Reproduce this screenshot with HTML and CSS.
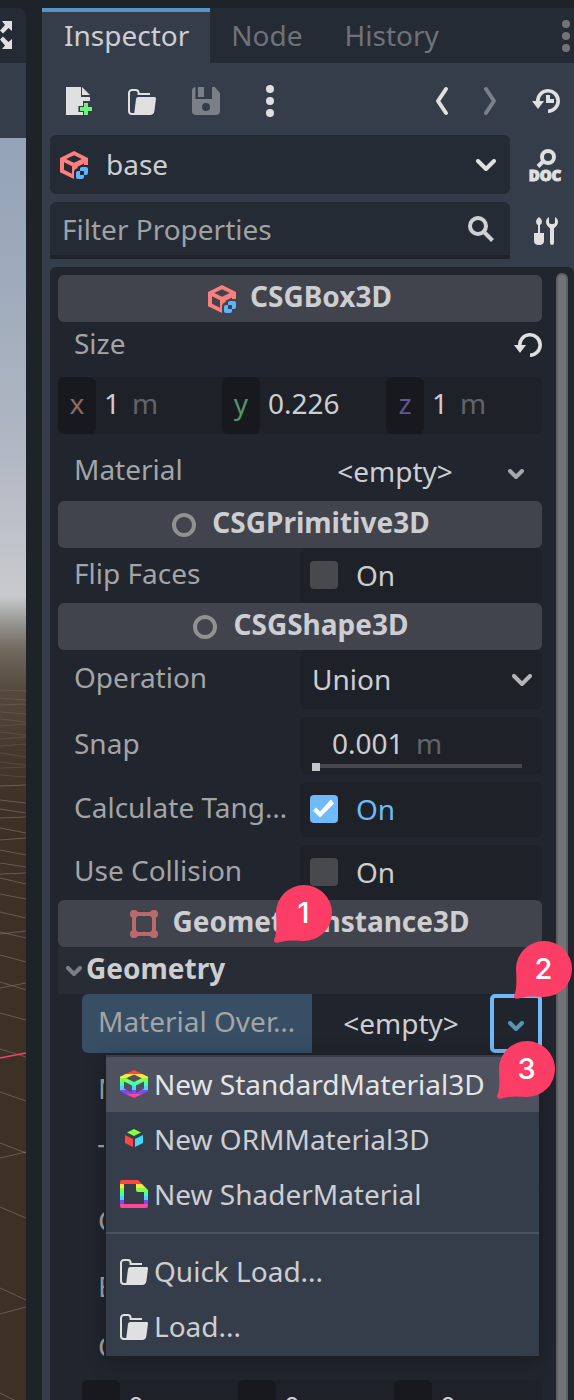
FILE: index.html
```html
<!DOCTYPE html>
<html lang="en">
<head>
<meta charset="utf-8">
<meta name="viewport" content="width=device-width, initial-scale=1">
<title>Inspector</title>
<link rel="stylesheet" href="styles.css">
</head>
<body>
<svg class="defs" aria-hidden="true">
  <defs>
    <linearGradient id="rainbow" gradientUnits="userSpaceOnUse" x1="0" y1="1" x2="0" y2="15">
      <stop offset="0.143" stop-color="#ff4545"/><stop offset="0.143" stop-color="#ffe345"/>
      <stop offset="0.286" stop-color="#ffe345"/><stop offset="0.286" stop-color="#80ff45"/>
      <stop offset="0.429" stop-color="#80ff45"/><stop offset="0.429" stop-color="#45ffa2"/>
      <stop offset="0.571" stop-color="#45ffa2"/><stop offset="0.571" stop-color="#45d7ff"/>
      <stop offset="0.714" stop-color="#45d7ff"/><stop offset="0.714" stop-color="#8045ff"/>
      <stop offset="0.857" stop-color="#8045ff"/><stop offset="0.857" stop-color="#ff4596"/>
    </linearGradient>
    <symbol id="csgbox" viewBox="1 1 14 14">
      <path fill="#fc7f7f" fill-rule="evenodd" d="M8 1 1 4.500v7.100L8 15v-3.200q0-1.800 1.800-2.200V8.900L13 7.300V8h2V4.500zM8 3.100l3.900 1.900L8 6.900 4.100 5zM3 6.600l4 2v3.800l-4-2z"/>
      <path fill="#5fb2ff" d="M12 9c-.554 0-1 .446-1 1v1h2v2h1c.554 0 1-.446 1-1v-2c0-.554-.446-1-1-1zm1 4h-2v-2h-1c-.554 0-1 .446-1 1v2c0 .554.446 1 1 1h2c.554 0 1-.446 1-1z"/>
    </symbol>
    <symbol id="circle" viewBox="1 1 14 14"><circle cx="8" cy="8" r="5" fill="none" stroke="#919191" stroke-width="2"/></symbol>
    <symbol id="folder" viewBox="0 0 16 16">
      <path fill="none" stroke="#e0e0e0" d="M4.600 14.500H3A1.500 1.500 0 0 1 1.500 13V4A1.500 1.500 0 0 1 3 2.500h1.800A1.500 1.500 0 0 1 6.300 4v.5H12"/>
      <path fill="#e0e0e0" d="M6.200 6H14.300q.8 0 .7.800L14.200 13q-.3 2-2.200 2H3.500q.6-.4.700-1.500L5 7q.1-1 1.200-1z"/>
    </symbol>
    <symbol id="chevron" viewBox="0 0 20 12"><path fill="none" stroke="currentColor" stroke-width="4" stroke-linecap="round" stroke-linejoin="round" d="M2 2l8 8 8-8"/></symbol>
    <symbol id="chevron-small" viewBox="0 0 16 10"><path fill="none" stroke="currentColor" stroke-width="4" stroke-linecap="round" stroke-linejoin="round" d="M2 2l6 6 6-6"/></symbol>
    <symbol id="callout" viewBox="0 0 60 60">
      <path fill="#fc3e66" d="M31 1a28 28 0 1 1 0 56C22 56 13 56 5 58.500C2 59.500 .2 57 1.500 54.500C4 49 3.500 40 3 29A28 28 0 0 1 31 1z"/>
    </symbol>
  </defs>
</svg>

<main class="editor">
  <section class="viewport" aria-label="3D viewport">
    <div class="viewport-tabs">
      <button class="plain" aria-label="Expand viewport">
        <svg width="14" height="28" viewBox="0 0 14 28" fill="#e0e0e0"><path d="M2 0h10v10L8.500 7 3 12.500 0 9.500 5 4zM0 18.500l3-3L8.500 21l3.500-3v10H2l3-3.500z"/></svg>
      </button>
    </div>
    <div class="viewport-bar"></div>
    <div class="scene">
      <svg class="grid-lines" viewBox="0 0 26 730" preserveAspectRatio="none" fill="none" stroke="#8d877d" stroke-width="1">
        <g opacity=".25"><path d="M0 20l26 1M0 28l26 2M0 35l26-1M0 42l26 2M0 49l26 3M0 56l26-2M0 62l26 3M0 69l26-2M0 76l26-2M0 83l26 4M0 92l26 3M0 98l26-1M0 105l26 2"/></g>
        <g opacity=".5"><path d="M0 116l26-1M0 130l26 3M0 139l26 4M0 148l26-1M0 158l26 5M0 170l26-2M0 180l26 5M0 193l26 4M0 204l26-1M0 208l26 6M0 224l26 5M0 242l26 6M0 264l26-3M0 262l26 6M0 285l26 7M0 312l26 8M0 318l26-5M0 343l26 7M0 379l26 8M0 422l26 9M0 473l26 10M0 488l26-6M0 537l26 11M0 618l26 12M0 644l26-7M0 723l26 13"/></g>
        <path stroke="#fc3e66" stroke-width="1.500" d="M0 388l26-5"/>
      </svg>
    </div>
  </section>

  <section class="dock" aria-label="Inspector dock">
    <nav class="tabs">
      <button class="tab tab-active">Inspector</button>
      <button class="tab">Node</button>
      <button class="tab">History</button>
      <button class="plain tab-menu" aria-label="Dock options">
        <svg width="8" height="32" viewBox="0 0 8 32" fill="#727479"><circle cx="4" cy="4" r="4"/><circle cx="4" cy="16" r="4"/><circle cx="4" cy="28" r="4"/></svg>
      </button>
    </nav>

    <div class="toolbar">
      <button class="plain" aria-label="New resource">
        <svg class="icon" viewBox="0 0 16 16"><path fill="#e0e0e0" d="M2 1h7.500v5H14v2h-3.500v2.500H8.200v3h2.300V15H2z"/><path fill="#e0e0e0" d="M10 1l4 4h-4z"/><path fill="#6ff07f" d="M11 9h2v2h2v2h-2v2h-2v-2H9v-2h2z"/></svg>
      </button>
      <button class="plain" aria-label="Open resource"><svg class="icon"><use href="#folder"/></svg></button>
      <button class="plain" aria-label="Save resource" disabled>
        <svg class="icon" viewBox="0 0 16 16"><path fill="#7b7f88" fill-rule="evenodd" d="M2.700 1v6H11V1h1.400L15 4v9q0 2-2 2H3q-2 0-2-2V3q0-1.800 1.700-2zM8 9a2 2 0 1 0 0 4 2 2 0 0 0 0-4z"/><path fill="#7b7f88" d="M4 1h3v5H4z"/></svg>
      </button>
      <button class="plain" aria-label="Resource options">
        <svg class="icon" viewBox="0 0 16 16" fill="#e0e0e0"><circle cx="8" cy="2" r="2"/><circle cx="8" cy="8" r="2"/><circle cx="8" cy="14" r="2"/></svg>
      </button>
      <div class="history-buttons">
        <button class="plain" aria-label="Back"><svg class="icon" viewBox="0 0 16 16"><path fill="none" stroke="#e0e0e0" stroke-width="2" stroke-linecap="round" stroke-linejoin="round" d="M10 2 6 8l4 6"/></svg></button>
        <button class="plain" aria-label="Forward" disabled><svg class="icon" viewBox="0 0 16 16"><path fill="none" stroke="#7b7f88" stroke-width="2" stroke-linecap="round" stroke-linejoin="round" d="M6 2l4 6-4 6"/></svg></button>
        <button class="plain object-history" aria-label="Object history">
          <svg class="icon" viewBox="0 0 16 16"><path fill="none" stroke="#e0e0e0" stroke-width="1.800" d="M9 13.100A5.100 5.100 0 1 0 3.900 8.500"/><path fill="#e0e0e0" d="M1 8h6l-3 4zM8 5h2v2h2v2H8z"/></svg>
        </button>
      </div>
    </div>

    <div class="field-row">
      <div class="field object-field">
        <svg class="icon-glyph"><use href="#csgbox"/></svg>
        <select class="select" aria-label="Edited object"><option>base</option></select>
        <svg class="chevron bright"><use href="#chevron"/></svg>
      </div>
      <button class="plain" aria-label="Open documentation">
        <svg class="icon doc-icon" viewBox="0 0 32 32"><circle cx="18" cy="8" r="6" fill="none" stroke="#e0e0e0" stroke-width="4"/><path stroke="#e0e0e0" stroke-width="4" d="M13.500 12 8 17.500"/><text class="doc-text" x="15" y="32" text-anchor="middle">DOC</text></svg>
      </button>
    </div>

    <div class="field-row">
      <div class="field filter-field">
        <input class="filter-input" type="text" placeholder="Filter Properties" aria-label="Filter Properties">
        <svg width="26" height="26" viewBox="0 0 26 26" fill="none" stroke="#cfd0d3"><circle cx="10" cy="10" r="8" stroke-width="4"/><path stroke-width="4" d="M15.500 15.500l9 9"/></svg>
      </div>
      <button class="plain" aria-label="Property tools">
        <svg class="icon" viewBox="0 0 32 32" fill="#e0e0e0"><path d="M9 2q3 2 3 4.500T10 10v8h4v8q0 4-5 4t-5-4v-8h4v-8Q6 9 6 6.500T9 2z"/><path d="M19 2q-3 1.500-3 5t4 6.200V28q0 2 2 2t2-2V13.200q4-2.700 4-6.200t-3-5v5q0 2-3 2t-3-2z"/></svg>
      </button>
    </div>

    <div class="panel">
      <div class="properties">
        <h2 class="category"><svg class="icon-glyph"><use href="#csgbox"/></svg><span>CSGBox3D</span></h2>
        <div class="vector-head"><span>Size</span>
          <button class="plain" aria-label="Reset size"><svg class="icon-glyph" viewBox="1 1 14 14"><path fill="none" stroke="#e0e0e0" stroke-width="1.800" d="M9 13.100A5.100 5.100 0 1 0 3.900 8.500"/><path fill="#e0e0e0" d="M1 8h6l-3 4z"/></svg></button>
        </div>
        <div class="vector">
          <label class="axis"><span class="axis-name axis-x">x</span><input class="number short" type="text" value="1"><span class="unit">m</span></label>
          <label class="axis"><span class="axis-name axis-y">y</span><input class="number" type="text" value="0.226"></label>
          <label class="axis"><span class="axis-name axis-z">z</span><input class="number short" type="text" value="1"><span class="unit">m</span></label>
        </div>
        <div class="row tall after-vector">
          <span class="name">Material</span>
          <div class="resource"><button class="plain resource-name">&lt;empty&gt;</button><button class="plain resource-menu" aria-label="Material options"><svg class="chevron-small"><use href="#chevron-small"/></svg></button></div>
        </div>

        <h2 class="category"><svg class="icon-glyph"><use href="#circle"/></svg><span>CSGPrimitive3D</span></h2>
        <div class="row">
          <label class="name" for="flip">Flip Faces</label>
          <div class="value check"><input id="flip" type="checkbox"><span>On</span></div>
        </div>

        <h2 class="category"><svg class="icon-glyph"><use href="#circle"/></svg><span>CSGShape3D</span></h2>
        <div class="stack">
          <div class="row tall">
            <label class="name" for="operation">Operation</label>
            <div class="value option"><select id="operation" class="select"><option>Union</option></select><svg class="chevron"><use href="#chevron"/></svg></div>
          </div>
          <div class="row medium">
            <label class="name" for="snap">Snap</label>
            <div class="value spin">
              <div class="spin-text"><input id="snap" class="number" type="text" value="0.001"><span class="unit">m</span></div>
              <input class="slider" type="range" min="0" max="1" step="0.001" value="0" aria-label="Snap slider">
            </div>
          </div>
          <div class="row">
            <label class="name" for="tangents">Calculate Tang…</label>
            <div class="value check"><input id="tangents" type="checkbox" checked><span>On</span></div>
          </div>
          <div class="row">
            <label class="name" for="collision">Use Collision</label>
            <div class="value check"><input id="collision" type="checkbox"><span>On</span></div>
          </div>
        </div>

        <h2 class="category">
          <svg class="icon-glyph" viewBox="1 1 14 14" fill="#b96b6b"><path fill="none" stroke="#b96b6b" stroke-width="2" d="M3 3h10v10H3z"/><circle cx="3" cy="3" r="2"/><circle cx="13" cy="3" r="2"/><circle cx="3" cy="13" r="2"/><circle cx="13" cy="13" r="2"/></svg>
          <span>GeometryInstance3D</span>
          <span class="callout callout-1"><svg><use href="#callout"/></svg><b>1</b></span>
        </h2>
        <h3 class="group"><svg class="chevron-small"><use href="#chevron-small"/></svg><span>Geometry</span></h3>
        <div class="nested stack">
          <div class="row tall override">
            <span class="name selected">Material Over…</span>
            <div class="resource"><button class="plain resource-name">&lt;empty&gt;</button><button class="plain resource-menu focused" aria-label="Material override options"><svg class="chevron-small"><use href="#chevron-small"/></svg></button></div>
            <span class="callout callout-2"><svg><use href="#callout"/></svg><b>2</b></span>
            <div class="menu" role="menu">
              <button class="item item-hover" role="menuitem">
                <svg class="icon-glyph" viewBox="1 1 14 14"><path fill="url(#rainbow)" fill-rule="evenodd" d="M8 1 1 4.400v7.200L8 15l7-3.400V4.400zM8 3.200l3.900 1.900L8 7 4.100 5.100zM3 6.700l4 2v3.700l-4-2zm10 0v3.700l-4 2V8.700z"/></svg>
                <span>New StandardMaterial3D</span>
              </button>
              <button class="item" role="menuitem">
                <svg class="icon-glyph" viewBox="0 0 28 28"><path fill="#80ff45" d="M14 4l7 3.500-7 3.500-7-3.500z"/><path fill="#ff4545" d="M5 10l8 4v8l-8-4z"/><path fill="#45d7ff" d="M23 10l-8 4v8l8-4z"/></svg>
                <span>New ORMMaterial3D</span>
              </button>
              <button class="item" role="menuitem">
                <svg class="icon-glyph" viewBox="1 1 14 14"><path fill="url(#rainbow)" fill-rule="evenodd" d="M2 1h8l5 5v8q0 1-1 1H2q-1 0-1-1V2q0-1 1-1zm1 2v10h10V7h-3q-1 0-1-1V3z"/></svg>
                <span>New ShaderMaterial</span>
              </button>
              <hr class="separator">
              <button class="item" role="menuitem"><svg class="icon-glyph" viewBox="1 1 14 14"><use href="#folder" width="16" height="16"/></svg><span>Quick Load...</span></button>
              <button class="item" role="menuitem"><svg class="icon-glyph" viewBox="1 1 14 14"><use href="#folder" width="16" height="16"/></svg><span>Load...</span></button>
              <span class="callout callout-3"><svg><use href="#callout"/></svg><b>3</b></span>
            </div>
          </div>
          <div class="row tall"><span class="name">Material Over…</span><div class="resource"></div></div>
          <div class="row medium"><span class="name">Transparency</span><div class="value"></div></div>
          <div class="row tall"><span class="name">Cast Shadow</span><div class="value"></div></div>
          <div class="row medium"><span class="name">Extra Cull Ma…</span><div class="value"></div></div>
          <div>
            <div class="vector-head"><span>Custom AABB</span></div>
            <div class="vector">
              <label class="axis"><span class="axis-name axis-x">x</span><input class="number short" type="text" value="0"></label>
              <label class="axis"><span class="axis-name axis-y">y</span><input class="number short" type="text" value="0"></label>
              <label class="axis"><span class="axis-name axis-z">z</span><input class="number short" type="text" value="0"></label>
            </div>
          </div>
        </div>
      </div>
      <div class="scrollbar" aria-hidden="true"></div>
    </div>
  </section>
</main>
</body>
</html>
```

FILE: styles.css
```css
* { box-sizing: border-box; }

body {
  margin: 0;
  background: #1e2229;
  color: #cdced2;
  font-family: "Noto Sans", sans-serif;
  font-size: 28px;
  line-height: 38px;
}

button, input, select {
  font: inherit;
  color: inherit;
  margin: 0;
  padding: 0;
  border: 0;
  background: transparent;
  outline: none;
}

input { min-width: 0; }
svg { display: block; flex: none; }
.defs { position: absolute; width: 0; height: 0; }
.plain { display: flex; align-items: center; justify-content: center; }
.icon { width: 32px; height: 32px; }
.icon-glyph { width: 28px; height: 28px; }
.chevron { width: 20px; height: 12px; color: #b4b5b9; pointer-events: none; }
.chevron-small { width: 16px; height: 10px; color: #a6a7ab; }
.bright { color: #e0e0e0; }

.editor {
  display: flex;
  gap: 16px;
  height: 100vh;
  padding-top: 8px;
  overflow: hidden;
}

/* 3D viewport */
.viewport { display: flex; flex-direction: column; flex: none; width: 26px; }
.viewport-tabs { height: 55px; padding-top: 13px; background: #252b34; border-radius: 0 8px 0 0; }
.viewport-bar { height: 75px; background: #363d4a; }
.scene {
  display: flex;
  flex-direction: column;
  justify-content: flex-end;
  flex: 1;
  background: linear-gradient(#94a3b8, #9daabb 130px, #b0b6c2 300px, #babfc8 370px, #c6c8cc 445px, #c8cacd 458px, #989793 484px, #70675e 512px, #54493c 552px, #43372b 622px, #3d3126 680px);
}
.grid-lines { width: 100%; height: 730px; }

/* Dock */
.dock { display: flex; flex-direction: column; flex: 1; min-width: 0; background: #363d4a; }
.tabs { display: flex; flex: none; background: #252b34; }
.tab { padding: 4px 21px 9px; border-top: 4px solid transparent; color: #6f7278; }
.tab-active { padding-left: 22px; background: #363d4a; border-top-color: #5a93c8; color: #cdced2; }
.tab-menu { margin-left: auto; padding-right: 4px; }

.toolbar { display: flex; flex: none; gap: 32px; height: 72px; padding: 4px 12px 0 20px; }
.history-buttons { display: flex; gap: 16px; margin-left: auto; }
.object-history { margin-left: 8px; }

.field-row { display: flex; flex: none; gap: 20px; padding: 0 12px 0 8px; margin-bottom: 8px; }
.field { display: flex; align-items: center; flex: 1; min-width: 0; background: #252b34; }
.object-field { gap: 18px; height: 59px; padding: 0 14px 0 10px; border-radius: 6px; }
.filter-field { height: 57px; padding: 0 16px 0 12px; border-bottom: 4px solid #1e2229; border-radius: 6px 6px 0 0; }
.filter-input { flex: 1; }
.filter-input::placeholder { color: #9fa1a4; opacity: 1; }
.select { appearance: none; flex: 1; min-width: 0; padding-bottom: 2px; }
.doc-icon { overflow: visible; }
.doc-text { fill: #e0e0e0; stroke: #e0e0e0; stroke-width: 1px; font-size: 15px; font-weight: 900; }

/* Property list */
.panel { display: flex; flex: 1; gap: 14px; min-height: 0; margin-left: 8px; padding: 0 6px 0 8px; background: #21252e; border-radius: 6px 6px 0 0; }
.properties { flex: 1; min-width: 0; padding-top: 8px; }
.scrollbar { flex: none; width: 12px; margin-top: 6px; border: 2px solid #5e6066; border-bottom: 0; border-radius: 6px 6px 0 0; background: #727377; }

.category {
  position: relative;
  display: flex;
  align-items: center;
  justify-content: center;
  gap: 14px;
  height: 47px;
  margin: 0;
  border-radius: 6px;
  background: #41444c;
  font-size: 28px;
  font-weight: 700;
}
.category > span:not(.callout), .group span { padding-bottom: 5px; }
.group {
  display: flex;
  align-items: center;
  gap: 4px;
  height: 47px;
  margin: 0;
  padding-left: 8px;
  background: #282c35;
  font-size: 28px;
  font-weight: 700;
}
.group .chevron-small { color: #7c7e83; }

.stack { display: flex; flex-direction: column; gap: 8px; }
.nested { padding-left: 24px; }
.row { display: grid; grid-template-columns: 1fr 1fr; height: 55px; }
.medium { height: 57px; }
.tall { height: 59px; }
.after-vector { margin-top: 8px; }
.name {
  display: flex;
  align-items: center;
  min-width: 0;
  padding: 0 0 6px 16px;
  color: #a3a4a6;
  white-space: nowrap;
}
.selected { background: #374e65; border-radius: 6px 0 0 6px; }
.value { display: flex; align-items: center; min-width: 0; border-radius: 6px; background: #1e2228; }
.option { padding: 0 10px 0 12px; }

.check { gap: 18px; padding-left: 10px; padding-bottom: 2px; }
.check input { appearance: none; width: 28px; height: 28px; border-radius: 4px; background: #48494d; }
.check input:checked { background: #70bafa; }
.check input:checked::before {
  content: "";
  display: block;
  width: 28px;
  height: 28px;
  background: #fff;
  clip-path: polygon(3px 16px, 6px 13px, 10px 17px, 21px 5px, 24px 9px, 10px 23px);
}
.check input:checked + span { color: #70bafa; }

.spin { flex-direction: column; align-items: stretch; gap: 1px; padding: 7px 20px 3px 12px; }
.spin-text { display: flex; gap: 12px; padding-left: 20px; }
.number { width: 72px; height: 38px; }
.short { width: 16px; }
.unit { color: #616469; }
.slider { appearance: none; width: 100%; height: 8px; background: linear-gradient(transparent 1px, #45474c 1px, #45474c 5px, transparent 5px); }
.slider::-webkit-slider-thumb { appearance: none; width: 8px; height: 8px; background: #c4c5c8; }

.vector-head { display: flex; justify-content: space-between; height: 55px; padding: 2px 0 0 16px; color: #a3a4a6; }
.vector-head .plain { height: 42px; }
.vector { display: grid; grid-template-columns: repeat(3, 1fr); gap: 8px; height: 57px; border-radius: 6px; background: #1e2228; }
.axis { display: flex; align-items: center; min-width: 0; }
.axis input, .axis .unit { margin-bottom: 6px; }
.axis input { margin-left: 8px; }
.axis .unit { margin-left: 12px; }
.axis-name {
  display: flex;
  align-items: center;
  justify-content: center;
  width: 38px;
  height: 100%;
  padding-bottom: 6px;
  border-radius: 6px;
  background: #17191e;
}
.axis-x { color: #8f6b60; }
.axis-y { color: #52946c; }
.axis-z { color: #64549a; }

.resource { display: flex; min-width: 0; }
.resource-name { flex: 1; padding-bottom: 2px; }
.resource-menu { width: 52px; padding-top: 4px; }
.override { position: relative; z-index: 1; }
.override .resource { background: #20242c; }
.focused { border: 4px solid #70bafa; border-radius: 5px; }
.focused .chevron-small { color: #5795b3; }

/* Resource menu */
.menu {
  position: absolute;
  top: 61px;
  left: 24px;
  right: 3px;
  padding: 2px 0;
  background: #363d4a;
  box-shadow: 0 0 0 2px #1d2127, 0 4px 20px rgba(0, 0, 0, 0.3);
}
.item { display: flex; align-items: center; gap: 6px; width: 100%; height: 55px; padding: 0 14px 2px; white-space: nowrap; }
.item-hover { background: #4d525e; color: #e4e5e7; }
.separator { height: 2px; margin: 10px 0; border: 0; background: #4b515e; }

/* Numbered callouts */
.callout { position: absolute; z-index: 2; width: 60px; height: 60px; }
.callout svg { width: 60px; height: 60px; }
.callout b {
  position: absolute;
  inset: 0 0 2px 1px;
  display: grid;
  place-items: center;
  color: #fff;
  font-family: Inter, sans-serif;
  font-size: 29px;
  font-weight: 500;
}
.callout-1 { top: -16px; left: 215px; }
.callout-2 { top: -54px; right: -31px; }
.callout-3 { top: -15px; right: -17px; }
```
